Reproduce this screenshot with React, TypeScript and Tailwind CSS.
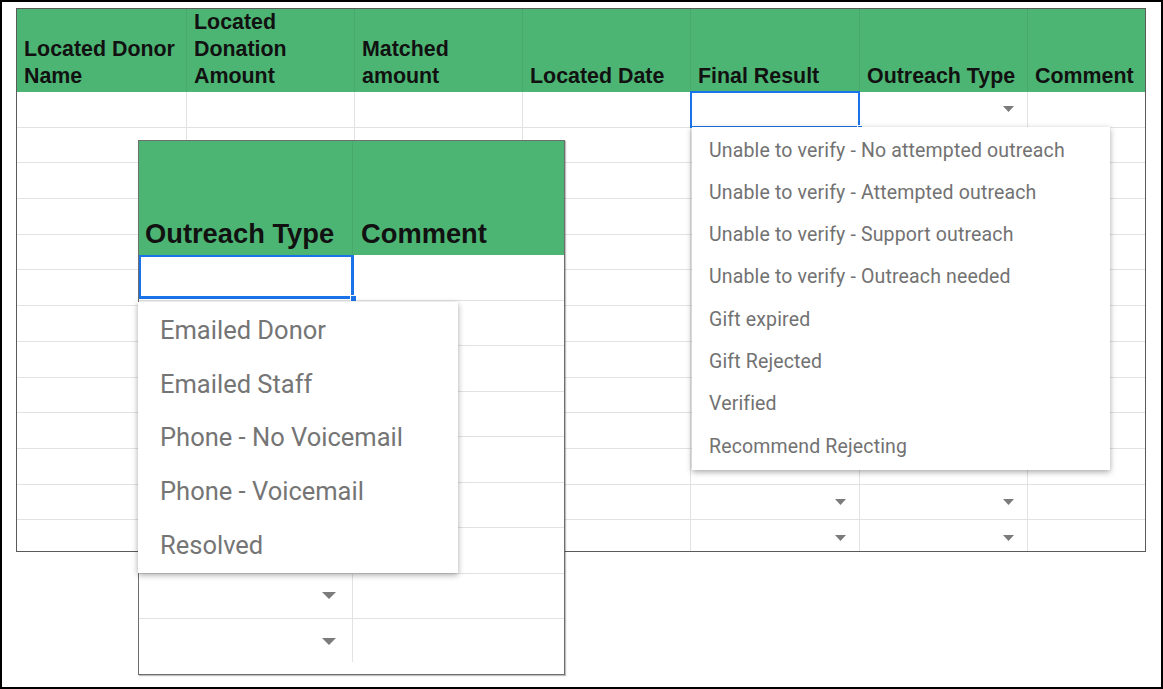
import React from 'react';

const mainCols = [
  ['Located Donor', 'Name'],
  ['Located', 'Donation', 'Amount'],
  ['Matched', 'amount'],
  ['Located Date'],
  ['Final Result'],
  ['Outreach Type'],
  ['Comment'],
];

const resultOptions = [
  'Unable to verify - No attempted outreach',
  'Unable to verify - Attempted outreach',
  'Unable to verify - Support outreach',
  'Unable to verify - Outreach needed',
  'Gift expired',
  'Gift Rejected',
  'Verified',
  'Recommend Rejecting',
];

const outreachOptions = [
  'Emailed Donor',
  'Emailed Staff',
  'Phone - No Voicemail',
  'Phone - Voicemail',
  'Resolved',
];

function Caret({ big = false }: { big?: boolean }) {
  return big ? (
    <svg width="14" height="7" viewBox="0 0 14 7">
      <path d="M0 0h14L7 7z" fill="#7b7b7b" />
    </svg>
  ) : (
    <svg width="11" height="6" viewBox="0 0 11 6">
      <path d="M0 0h11L5.5 6z" fill="#7b7b7b" />
    </svg>
  );
}

function Selection({ big = false }: { big?: boolean }) {
  return big ? (
    <>
      <div className="absolute z-10 -left-[1px] -top-[1px] -right-[2px] bottom-[1px] border-[3px] border-[#1a73e8]" />
      <div className="absolute z-10 bottom-[-2px] -right-[5px] w-[7px] h-[7px] bg-[#1a73e8] border border-white" />
    </>
  ) : (
    <>
      <div className="absolute z-10 -inset-[1px] border-[2.5px] border-[#1a73e8]" />
      <div className="absolute z-10 -bottom-[4px] -right-[4px] w-[6px] h-[6px] bg-[#1a73e8] border border-white" />
    </>
  );
}

const mainGrid = 'grid grid-cols-[170px_168px_168px_168px_169px_168px_1fr]';

function MainSheet() {
  const rows = Array.from({ length: 13 }, (_, i) => i);
  return (
    <div className="w-[1130px] h-[544px] border border-[#5a5a5a] overflow-hidden bg-white">
      <div className={`${mainGrid} h-[83px] bg-[#4db574]`}>
        {mainCols.map((lines, i) => (
          <div
            key={i}
            className={`flex flex-col justify-end pl-[7px] pb-[2px] text-[21.4px] leading-[27px] font-bold text-[#111] ${
              i < 6 ? 'border-r border-[#47aa6c]' : ''
            }`}
          >
            {lines.map((l) => (
              <span key={l} className="whitespace-nowrap">
                {l}
              </span>
            ))}
          </div>
        ))}
      </div>
      {rows.map((r) => (
        <div key={r} className={`${mainGrid} h-[35.7px] border-b border-[#e2e2e2]`}>
          {mainCols.map((_, c) => {
            const arrow = (r === 0 && c === 5) || (r >= 11 && (c === 4 || c === 5));
            return (
              <div
                key={c}
                className={`relative flex items-center justify-end pr-[13px] ${
                  c < 6 ? 'border-r border-[#e2e2e2]' : ''
                }`}
              >
                {arrow && <Caret />}
                {r === 0 && c === 4 && <Selection />}
              </div>
            );
          })}
        </div>
      ))}
    </div>
  );
}

function InsetSheet() {
  const rows = Array.from({ length: 9 }, (_, i) => i);
  return (
    <div className="absolute z-30 left-[136px] top-[138px] w-[427px] h-[535px] bg-white border-[1.5px] border-[#6e6e6e] shadow-[1px_1px_1px_rgba(0,0,0,0.25)]">
      <div className="grid grid-cols-[214px_1fr] h-[114px] bg-[#4db574]">
        <div className="flex items-end pl-[6px] pb-[6px] border-r border-[#47aa6c] text-[27.3px] leading-[30px] font-bold text-[#111] whitespace-nowrap">
          Outreach Type
        </div>
        <div className="flex items-end pl-[8px] pb-[6px] text-[27.3px] leading-[30px] font-bold text-[#111]">
          Comment
        </div>
      </div>
      <div className="h-[407px] overflow-hidden">
        {rows.map((r) => (
          <div key={r} className="grid grid-cols-[214px_1fr] h-[45.5px] border-b border-[#e2e2e2]">
            <div className="relative flex items-center justify-end pr-[16px] border-r border-[#e2e2e2]">
              {r >= 7 && <Caret big />}
              {r === 0 && <Selection big />}
            </div>
            <div />
          </div>
        ))}
      </div>
    </div>
  );
}

export default function App() {
  return (
    <div
      className="relative w-[1163px] h-[689px] border-2 border-black bg-white pl-[14px] pt-[6px] overflow-hidden"
      style={{ fontFamily: '"Liberation Sans", Arial, sans-serif' }}
    >
      <MainSheet />

      {/* Final Result dropdown */}
      <div className="absolute z-20 left-[690px] top-[125px] w-[418px] h-[343px] py-[2px] bg-white shadow-[0_2px_6px_rgba(0,0,0,0.35)] font-['Roboto',sans-serif]">
        {resultOptions.map((o) => (
          <div
            key={o}
            className="h-[42.3px] flex items-center pl-[17px] text-[19.5px] tracking-[0.15px] text-[#727272] whitespace-nowrap"
          >
            {o}
          </div>
        ))}
      </div>

      <InsetSheet />

      {/* Outreach Type dropdown */}
      <div className="absolute z-40 left-[136px] top-[300px] w-[320px] h-[271px] pt-[1px] bg-white shadow-[0_2px_6px_rgba(0,0,0,0.35)] font-['Roboto',sans-serif]">
        {outreachOptions.map((o) => (
          <div
            key={o}
            className="h-[53.75px] flex items-center pl-[22px] text-[25.5px] text-[#757575] whitespace-nowrap"
          >
            {o}
          </div>
        ))}
      </div>
    </div>
  );
}
